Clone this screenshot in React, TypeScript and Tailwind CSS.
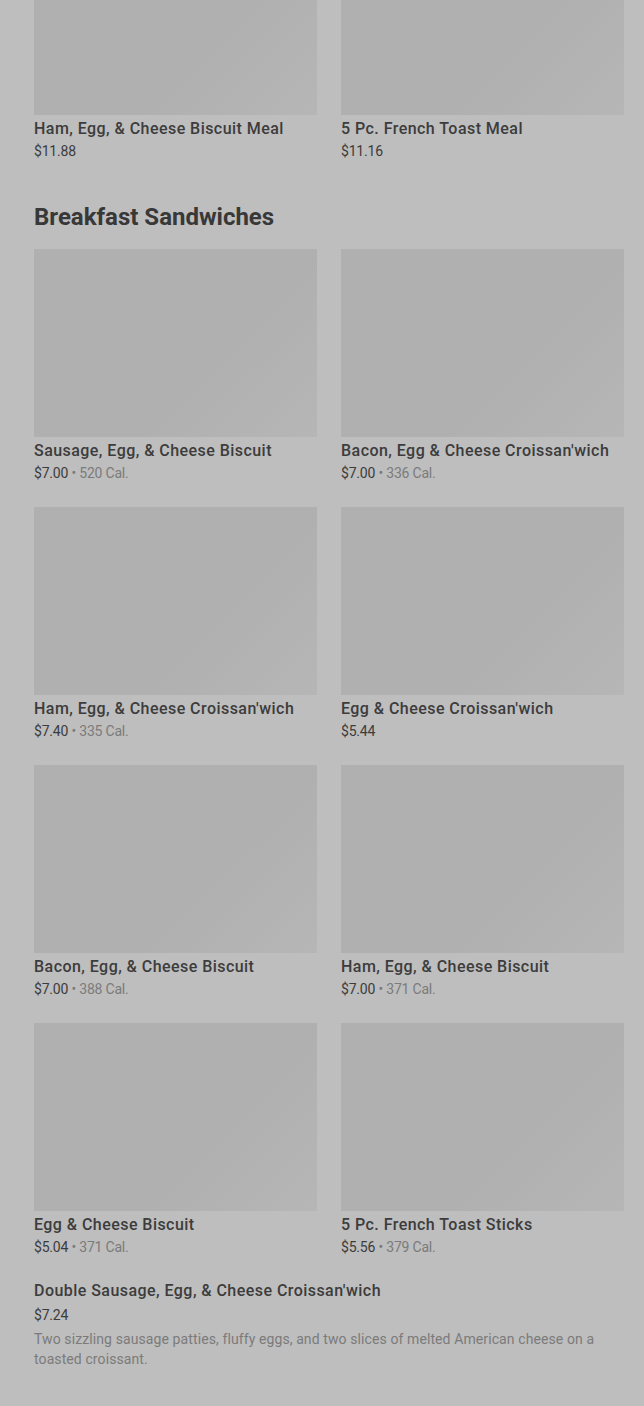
import React from "react";

type Item = { name: string; price: string; cal?: string };

const topRow: Item[] = [
  { name: "Ham, Egg, & Cheese Biscuit Meal", price: "$11.88" },
  { name: "5 Pc. French Toast Meal", price: "$11.16" },
];

const sandwiches: Item[] = [
  { name: "Sausage, Egg, & Cheese Biscuit", price: "$7.00", cal: "520 Cal." },
  { name: "Bacon, Egg & Cheese Croissan'wich", price: "$7.00", cal: "336 Cal." },
  { name: "Ham, Egg, & Cheese Croissan'wich", price: "$7.40", cal: "335 Cal." },
  { name: "Egg & Cheese Croissan'wich", price: "$5.44" },
  { name: "Bacon, Egg, & Cheese Biscuit", price: "$7.00", cal: "388 Cal." },
  { name: "Ham, Egg, & Cheese Biscuit", price: "$7.00", cal: "371 Cal." },
  { name: "Egg & Cheese Biscuit", price: "$5.04", cal: "371 Cal." },
  { name: "5 Pc. French Toast Sticks", price: "$5.56", cal: "379 Cal." },
];

function Card({ item }: { item: Item }) {
  return (
    <div className="flex flex-col">
      <div className="h-[188px] w-full bg-[linear-gradient(135deg,#b0b0b0_0%,#b0b0b0_62%,#b6b6b6_100%)]" />
      <div className="mt-[2px] text-[16px] leading-6 font-medium tracking-[0.45px] text-[#3c3c3c] whitespace-nowrap">
        {item.name}
      </div>
      <div className="text-[14px] leading-5 tracking-[-0.2px] text-[#3c3c3c]">
        {item.price}
        {item.cal && (
          <span className="text-[#7b7b7b]">
            {" "}
            • {item.cal}
          </span>
        )}
      </div>
    </div>
  );
}

export default function App() {
  return (
    <div
      className="w-[644px] h-[1406px] overflow-hidden bg-[#bebebe] pl-[34px] pr-[20px]"
      style={{ fontFamily: "Roboto, 'Liberation Sans', sans-serif" }}
    >
      <div className="mt-[-73px] grid grid-cols-2 gap-x-6">
        {topRow.map((it, i) => (
          <Card key={i} item={it} />
        ))}
      </div>

      <h2 className="mt-[40px] text-[24px] leading-8 font-bold tracking-[0px] text-[#383838]">
        Breakfast Sandwiches
      </h2>

      <div className="mt-4 grid grid-cols-2 gap-x-6 gap-y-6">
        {sandwiches.map((it, i) => (
          <Card key={i} item={it} />
        ))}
      </div>

      <div className="mt-[22px] flex flex-col">
        <div className="text-[16px] leading-6 font-medium tracking-[0.45px] text-[#3c3c3c]">
          Double Sausage, Egg, &amp; Cheese Croissan'wich
        </div>
        <div className="mt-[2px] text-[14px] leading-5 tracking-[-0.2px] text-[#3c3c3c]">$7.24</div>
        <div className="mt-[4px] text-[14px] leading-5 tracking-[0.1px] text-[#7b7b7b] pr-[20px]">
          Two sizzling sausage patties, fluffy eggs, and two slices of melted American cheese on a
          toasted croissant.
        </div>
      </div>
    </div>
  );
}
